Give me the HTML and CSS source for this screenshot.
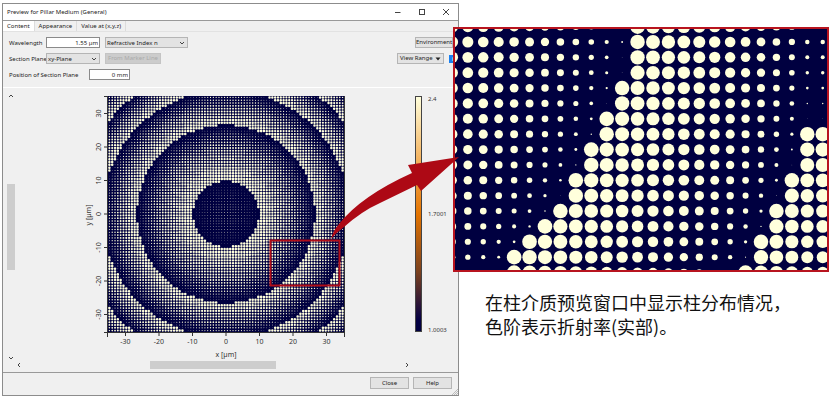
FILE: index.html
```html
<!DOCTYPE html>
<html lang="zh">
<head>
<meta charset="utf-8">
<title>Preview for Pillar Medium (General)</title>
<link rel="stylesheet" href="styles.css">
</head>
<body>
<main class="page">
  <section class="window" lang="en">
    <header class="titlebar">
      <span class="title">Preview for Pillar Medium (General)</span>
      <button class="caption-button" aria-label="Minimize"><svg viewBox="0 0 8 8"><path d="M1 4.500h5.500"/></svg></button>
      <button class="caption-button" aria-label="Maximize"><svg viewBox="0 0 8 8"><rect x="1.500" y="1.500" width="5" height="5"/></svg></button>
      <button class="caption-button" aria-label="Close window"><svg viewBox="0 0 8 8"><path d="M1 1l6 6M7 1l-6 6"/></svg></button>
    </header>
    <nav class="tabs">
      <button class="tab active">Content</button>
      <button class="tab">Appearance</button>
      <button class="tab">Value at (x,y,z)</button>
    </nav>
    <div class="settings">
      <div class="row">
        <label class="name" for="wave">Wavelength</label>
        <input class="field" id="wave" value="1.55 µm">
        <span class="picker wide"><select aria-label="Quantity"><option>Refractive Index n</option></select><svg viewBox="0 0 6 4"><path d="M1 1l2 2 2-2"/></svg></span>
        <button class="push end environment">Environment</button>
      </div>
      <div class="row">
        <label class="name" for="plane">Section Plane</label>
        <span class="picker"><select id="plane"><option>xy-Plane</option></select><svg viewBox="0 0 6 4"><path d="M1 1l2 2 2-2"/></svg></span>
        <button class="push marker" disabled>From Marker Line</button>
        <button class="push end range">View Range<svg viewBox="0 0 6 4"><path d="M0.500 0.500h5l-2.500 3z"/></svg></button>
        <button class="info" aria-label="Information">i</button>
      </div>
      <div class="row">
        <label class="long-name" for="position">Position of Section Plane</label>
        <input class="field small" id="position" value="0 mm">
      </div>
    </div>
    <div class="viewer">
      <div class="vscroll">
        <svg viewBox="0 0 6 4"><path d="M1 3l2-2 2 2"/></svg>
        <div class="vtrack"><div class="vthumb"></div></div>
        <svg viewBox="0 0 6 4"><path d="M1 1l2 2 2-2"/></svg>
      </div>
      <svg class="chart" viewBox="0 0 440 270" role="img" aria-label="Pillar distribution">
        <defs>
          <linearGradient id="scale" x1="0" y1="0" x2="0" y2="1">
            <stop offset="0" stop-color="#ffffdc"/>
            <stop offset=".25" stop-color="#f5b868"/>
            <stop offset=".5" stop-color="#e47400"/>
            <stop offset=".75" stop-color="#79401f"/>
            <stop offset=".95" stop-color="#050044"/>
            <stop offset="1" stop-color="#000040"/>
          </linearGradient>
        </defs>
        <rect class="night" x="91" y="6" width="236" height="236"/>
        <path class="pillars" id="lens"/>
        <path class="axis" d="M87 6.500h4M87 242.500h241M90.500 6v241M327.500 6v241"/>
        <g id="ticks"></g>
        <text class="label middle" x="209" y="267">x [µm]</text>
        <text class="label middle" transform="translate(74 125) rotate(-90)">y [µm]</text>
        <rect class="bar" x="398.500" y="6.500" width="6" height="235" fill="url(#scale)"/>
        <text class="value" x="411" y="11">2.4</text>
        <text class="value" x="411" y="126">1.7001</text>
        <text class="value" x="411" y="242">1.0003</text>
        <rect class="marker-box" x="253.500" y="150.500" width="69" height="45"/>
      </svg>
      <div class="hscroll">
        <svg viewBox="0 0 4 6"><path d="M3 1l-2 2 2 2"/></svg>
        <div class="htrack"><div class="hthumb"></div></div>
        <svg viewBox="0 0 4 6"><path d="M1 1l2 2-2 2"/></svg>
      </div>
    </div>
    <footer class="footer">
      <button class="push">Close</button>
      <button class="push">Help</button>
      <svg class="grip" viewBox="0 0 6 6"><path d="M0 6L6 0M2 6l4-4M4 6l2-2"/></svg>
    </footer>
  </section>
  <section class="detail">
    <svg class="inset" viewBox="0 0 376 245" role="img" aria-label="Enlarged pillars">
      <rect class="night" width="376" height="245"/>
      <g class="pillars" id="zoomed"></g>
      <rect class="frame" x="1" y="1" width="374" height="243"/>
    </svg>
    <p class="caption">在柱介质预览窗口中显示柱分布情况，<br>色阶表示折射率(实部)。</p>
  </section>
  <svg class="arrow" viewBox="0 0 130 86" aria-hidden="true"><path d="M129 2L78 10L82 18Q31 41 9 69Q3 76 1 84Q7 77 14 72Q32 56 50 48L87 30L91 36Z"/></svg>
</main>
<script src="plot.js"></script>
</body>
</html>
```
FILE: styles.css
```css
* { box-sizing: border-box; }
body { margin: 0; background: #fff; color: #222; font: 6px/10px "Noto Sans", "Open Sans", sans-serif; }
button, input, select { font: inherit; color: inherit; margin: 0; padding: 0; border-radius: 0; }
button { border: 0; background: none; }
svg { display: block; fill: none; stroke: #444; overflow: visible; }
.page { position: relative; display: grid; grid-template-columns: 459fr 372fr; padding-top: 3px; }
.window { margin-left: 2px; border: 1px solid #8c8c8c; background: #f0f0f0; min-width: 0; }
.titlebar { display: flex; align-items: center; height: 17px; background: #fff; border-bottom: 1px solid #999; padding: 0 8px 0 4px; }
.title { margin-right: auto; }
.caption-button { width: 8px; margin-left: 16px; }
.caption-button svg { width: 8px; height: 8px; }
.tabs { display: flex; height: 11px; border-bottom: 1px solid #e2e2e2; }
.tab { padding: 0 4px; border-right: 1px solid #dcdcdc; line-height: 10px; }
.tab.active { background: #fff; }
.settings { display: grid; gap: 5px; padding: 5px 5px 7px 6px; border-bottom: 1px solid #fff; }
.row { display: flex; align-items: center; height: 11px; }
.name { width: 37px; white-space: nowrap; }
.long-name { width: 80px; white-space: nowrap; }
.field { width: 54px; height: 11px; border: 1px solid #8a8a8a; background: #fff; text-align: right; padding-right: 1px; }
.field.small { width: 41px; }
.picker { display: flex; align-items: center; width: 54px; height: 11px; background: #e3e3e3; border: 1px solid #b5b5b5; }
.picker.wide { width: 83px; margin-left: 5px; }
.picker select { appearance: none; flex: 1; min-width: 0; height: 9px; border: 0; background: none; padding-left: 1px; }
.picker svg { width: 6px; height: 4px; margin-right: 2px; }
.push { height: 11px; border: 1px solid #b5b5b5; background: #e3e3e3; line-height: 9px; white-space: nowrap; }
.marker { width: 56px; margin-left: 5px; background: #ccc; border-color: #c4c4c4; color: #aaa; }
.end { margin-left: auto; }
.environment { width: 38px; }
.range { display: flex; align-items: center; justify-content: space-between; width: 47px; padding: 0 2px; }
.range svg { width: 6px; height: 4px; fill: #222; stroke: none; }
.info { width: 8px; height: 8px; margin: 0 -4px 0 5px; background: #1a80f0; color: #fff; line-height: 8px; font-weight: bold; }
.viewer { display: grid; grid-template-columns: 14px 1fr; padding: 2px 1px 3px 0; }
.vscroll { display: flex; flex-direction: column; align-items: center; padding: 4px 0 0 1px; }
.vscroll svg { width: 6px; height: 4px; }
.vtrack { flex: 1; width: 8px; display: flex; flex-direction: column; justify-content: center; }
.vthumb { height: 33%; background: #cdcdcd; }
.chart { width: 100%; }
.hscroll { grid-column: 1 / -1; display: flex; align-items: center; height: 8px; margin: 1px 48px 0 14px; }
.hscroll svg { width: 4px; height: 6px; }
.htrack { flex: 1; height: 8px; display: flex; justify-content: center; }
.hthumb { width: 33%; background: #cdcdcd; }
.footer { position: relative; display: flex; gap: 4px; justify-content: flex-end; padding: 4px 6px 6px 0; border-top: 1px solid #999; }
.footer .push { width: 39px; height: 12px; line-height: 10px; }
.grip { position: absolute; right: 0; bottom: 0; width: 6px; height: 6px; stroke: #bbb; }
.night { fill: #000040; stroke: none; }
.pillars { fill: #ffffdc; stroke: none; }
.axis { stroke: #333; }
.bar { stroke: #444; }
.label { fill: #333; stroke: none; font-size: 7px; }
.value { fill: #333; stroke: none; font-size: 6px; }
.middle { text-anchor: middle; }
.marker-box { stroke: #b00d18; stroke-width: 2; }
.detail { margin: 24px 2px 0 -6px; }
.inset { width: 100%; overflow: hidden; }
.frame { stroke: #b8141f; stroke-width: 2; }
.caption { margin: 18px 0 0 32px; color: #111; font: 18px/24px "Noto Sans CJK SC", sans-serif; white-space: nowrap; }
.arrow { position: absolute; left: 330px; top: 155px; width: 130px; height: 86px; fill: #ad0915; stroke: none; }
```
FILE: plot.js
```js
const edges = [-800, 138, 1000, 1940, 2824, 3700];

// Pillar diameter, as a share of the cell, for a squared radius in cells.
function diameter(r2) {
  const zone = edges.findIndex((edge) => r2 < edge);
  return Math.sqrt((edges[zone] - r2) / (edges[zone] - edges[zone - 1]));
}

const pitch = 236 / 84;
let path = "";
for (let row = 0; row < 84; row++) {
  for (let col = 0; col < 84; col++) {
    const r = diameter((col - 41.5) ** 2 + (row - 41.5) ** 2) * pitch * 0.46;
    const x = 91 + (col + 0.5) * pitch - r;
    const y = 6 + (row + 0.5) * pitch;
    path += `M${x} ${y}a${r} ${r} 0 1 0 ${2 * r} 0a${r} ${r} 0 1 0 ${-2 * r} 0`;
  }
}
document.getElementById("lens").setAttribute("d", path);

let ticks = "";
for (let v = -30; v <= 30; v += 10) {
  const x = 209 + v * 3.35;
  const y = 124 - v * 3.35;
  ticks += `<path class="axis" d="M${x} 242v4M91 ${y}h-4"/>`;
  ticks += `<text class="label middle" x="${x}" y="254">${v}</text>`;
  ticks += `<text class="label middle" transform="translate(84 ${y}) rotate(-90)">${v}</text>`;
}
document.getElementById("ticks").innerHTML = ticks;

// First column of each outer zone, row by row.
const first = [12, 12, 12, 12, 11, 11, 10, 10, 9, 9, 8, 8, 7, 6, 5, 4, 4];
const second = [25, 25, 25, 25, 25, 25, 25, 23, 23, 23, 22, 22, 21, 21, 20, 20, 19];
let dots = "";
for (let i = 0; i < first.length; i++) {
  for (let col = 0; col < 25; col++) {
    const r2 = (Math.min(col, 23) + 19.5) ** 2 + (i + 6.4) ** 2;
    const end = col < first[i] ? 1000 : col < second[i] ? 1945 : 2885;
    const share = Math.min(0.98, Math.max(0.001, (end - r2) / 940));
    const r = 7.4 * Math.sqrt(share);
    dots += `<circle cx="${-0.6 + col * 15.43}" cy="${-0.4 + i * 15.37}" r="${r}"/>`;
  }
}
document.getElementById("zoomed").innerHTML = dots;
```
